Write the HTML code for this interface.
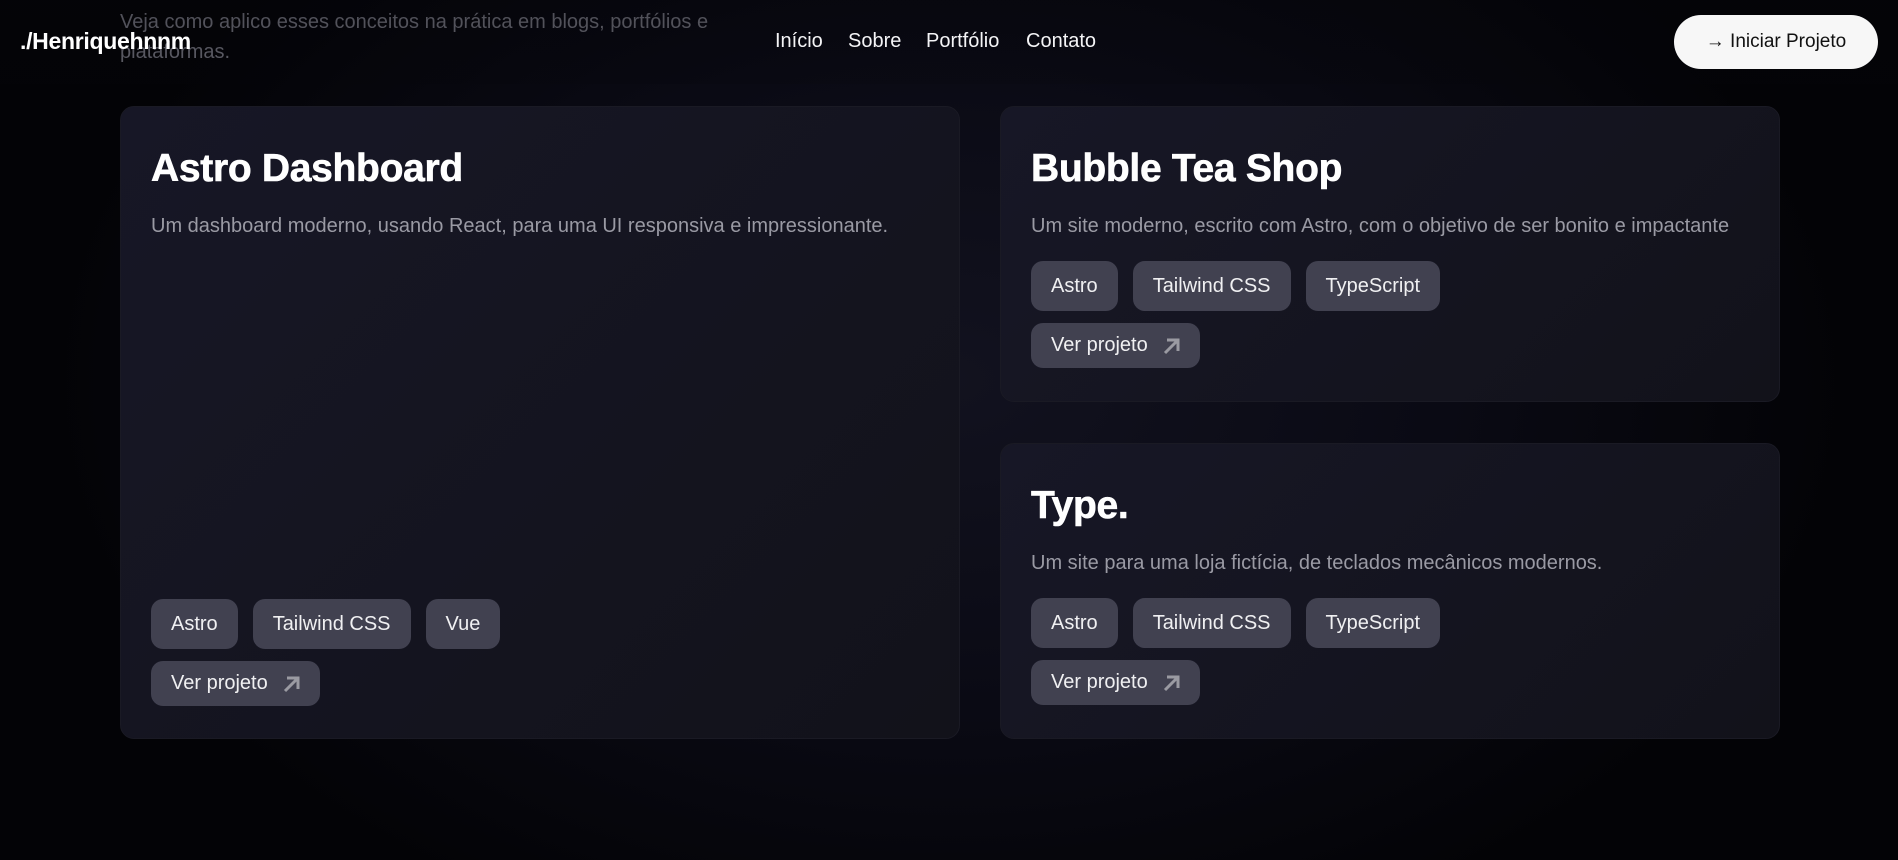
<!DOCTYPE html>
<html><head><meta charset="utf-8"><style>
*{margin:0;padding:0;box-sizing:border-box}
html,body{width:1898px;height:860px;overflow:hidden}
body{background:#05050a;background:radial-gradient(ellipse 900px 600px at 950px 380px,#12121f 0%,#0a0a14 55%,#030306 100%);font-family:"Liberation Sans",sans-serif;color:#fff;position:relative}
.sub{position:absolute;left:120px;top:7px;width:700px;font-size:20px;line-height:30px;color:#74747e}
.hdr{position:absolute;left:0;top:0;width:1898px;height:84px;background:linear-gradient(rgba(5,5,10,0.35),rgba(5,5,10,0.2))}
.logo{position:absolute;left:20px;top:28px;font-size:23px;font-weight:bold;letter-spacing:-0.3px}
.nav{position:absolute;top:30px;font-size:20px;color:#f4f4f6}
.btn{position:absolute;left:1674px;top:15px;width:204px;height:54px;border-radius:27px;background:#f7f7f7;color:#111;font-size:19px;text-align:center;line-height:54px}
.card{position:absolute;background:linear-gradient(135deg,#171726,#12121a);border-radius:14px;border:1px solid #1a1a24}
.card h2{position:absolute;left:30px;font-size:39px;font-weight:bold;letter-spacing:-0.3px;-webkit-text-stroke:0.6px #fff}
.card p{position:absolute;left:30px;font-size:20px;color:#9a9aa4}
.tags{position:absolute;left:30px;display:flex;gap:15px}
.tag{height:50px;line-height:50px;padding:0 20px;border-radius:12px;background:#414150;font-size:20px;color:#f0f0f2}
.ver{position:absolute;left:30px;height:45px;line-height:45px;padding:0 20px;border-radius:12px;background:#414150;font-size:20px;color:#f0f0f2;display:flex;align-items:center;gap:14px}
</style></head><body>
<div class="sub">Veja como aplico esses conceitos na prática em blogs, portfólios e plataformas.</div>
<div class="hdr"></div>
<div class="logo">./Henriquehnnm</div>
<div class="nav" style="left:775px">Início</div>
<div class="nav" style="left:848px">Sobre</div>
<div class="nav" style="left:926px">Portfólio</div>
<div class="nav" style="left:1026px">Contato</div>
<div class="btn">→ Iniciar Projeto</div>

<div class="card" style="left:120px;top:106px;width:840px;height:633px">
<h2 style="top:40px">Astro Dashboard</h2>
<p style="top:108px">Um dashboard moderno, usando React, para uma UI responsiva e impressionante.</p>
<div class="tags" style="top:492px"><div class="tag">Astro</div><div class="tag">Tailwind CSS</div><div class="tag">Vue</div></div>
<div class="ver" style="top:554px">Ver projeto <svg width="18" height="18" viewBox="0 0 18 18"><path d="M3 16L15 4M5 3h11v11" stroke="#9a9aa2" stroke-width="3" fill="none"/></svg></div>
</div>

<div class="card" style="left:1000px;top:106px;width:780px;height:296px">
<h2 style="top:40px">Bubble Tea Shop</h2>
<p style="top:108px">Um site moderno, escrito com Astro, com o objetivo de ser bonito e impactante</p>
<div class="tags" style="top:154px"><div class="tag">Astro</div><div class="tag">Tailwind CSS</div><div class="tag">TypeScript</div></div>
<div class="ver" style="top:216px">Ver projeto <svg width="18" height="18" viewBox="0 0 18 18"><path d="M3 16L15 4M5 3h11v11" stroke="#9a9aa2" stroke-width="3" fill="none"/></svg></div>
</div>

<div class="card" style="left:1000px;top:443px;width:780px;height:296px">
<h2 style="top:40px">Type.</h2>
<p style="top:108px">Um site para uma loja fictícia, de teclados mecânicos modernos.</p>
<div class="tags" style="top:154px"><div class="tag">Astro</div><div class="tag">Tailwind CSS</div><div class="tag">TypeScript</div></div>
<div class="ver" style="top:216px">Ver projeto <svg width="18" height="18" viewBox="0 0 18 18"><path d="M3 16L15 4M5 3h11v11" stroke="#9a9aa2" stroke-width="3" fill="none"/></svg></div>
</div>
</body></html>
